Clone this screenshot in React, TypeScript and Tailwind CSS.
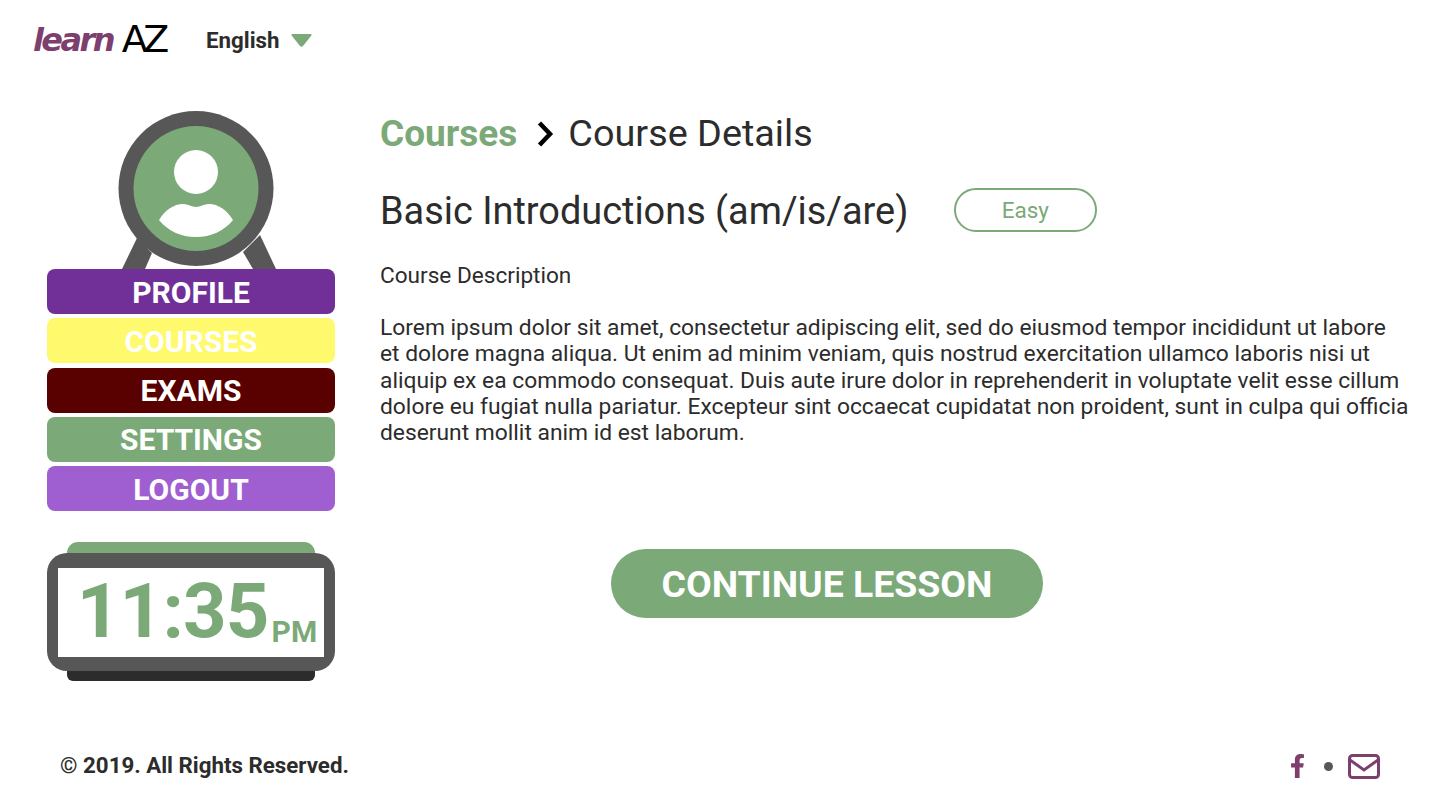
import { FaFacebookF } from 'react-icons/fa';

const menuItems = [
    { label: 'PROFILE', color: 'bg-[#703098]' },
    { label: 'COURSES', color: 'bg-[#fff96e]' },
    { label: 'EXAMS', color: 'bg-[#590000]' },
    { label: 'SETTINGS', color: 'bg-[#7ba978]' },
    { label: 'LOGOUT', color: 'bg-[#a05fd0]' },
];

const lorem =
    'Lorem ipsum dolor sit amet, consectetur adipiscing elit, sed do eiusmod tempor incididunt ut labore et dolore magna aliqua. Ut enim ad minim veniam, quis nostrud exercitation ullamco laboris nisi ut aliquip ex ea commodo consequat. Duis aute irure dolor in reprehenderit in voluptate velit esse cillum dolore eu fugiat nulla pariatur. Excepteur sint occaecat cupidatat non proident, sunt in culpa qui officia deserunt mollit anim id est laborum.';

function Avatar() {
    return (
        <svg width="164" height="158" viewBox="0 0 164 158" className="ml-[14px] block">
            <path d="M21 127 L6 158 H29 L36 142 Z M144 124 L160 158 H137 L127 141 Z" fill="#575757" />
            <circle cx="80" cy="77.5" r="77.5" fill="#575757" />
            <circle cx="80" cy="77.5" r="62.5" fill="#7ba978" />
            <circle cx="80" cy="61" r="22" fill="#fff" />
            <path d="M43 109 C49 99 58 93 67 93 C73 93 75 96 80 96 C85 96 87 93 93 93 C102 93 111 99 117 109 C108 120 95 126 80 126 C65 126 52 120 43 109 Z" fill="#fff" />
        </svg>
    );
}

function Clock() {
    return (
        <div className="flex flex-col items-center">
            <div className="h-[11px] w-[248px] rounded-t-[14px] bg-[#7ba978]" />
            <div className="h-[118px] w-[288px] rounded-[20px] bg-[#575757] px-[11px] py-[15px]">
                <div className="flex h-[89px] items-end justify-center bg-white pb-[7px] pl-[12px] text-[#7ba978]">
                    <span className="text-[76px] leading-[77px] font-bold tracking-[-0.8px]">11:35</span>
                    <span className="ml-[3px] text-[30px] leading-[36px] font-bold">PM</span>
                </div>
            </div>
            <div className="h-[10px] w-[248px] rounded-b-[6px] bg-[#2c2c2c]" />
        </div>
    );
}

export default function App() {
    return (
        <div className="h-[810px] w-[1440px] overflow-hidden bg-white font-['Roboto',sans-serif] text-[#2c2c2c]">
            <header className="flex h-[80px] items-center pl-[33px]">
                <div className="flex h-[72px] w-[173px] items-center leading-none">
                    <span className="font-['DejaVu_Sans',sans-serif] text-[32px] font-bold tracking-[-2.6px] text-[#7c3f6e] italic">learn</span>
                    <span className="mb-[3px] ml-[9px] font-['DejaVu_Sans',sans-serif] text-[38px] tracking-[-4.5px] text-black">AZ</span>
                </div>
                <span className="pt-[1px] text-[22.3px] font-bold">English</span>
                <svg width="21" height="13" viewBox="0 0 21 13" className="ml-[11px]">
                    <path d="M1.5 0 H19.5 Q21.5 0 20 2 L12 12 Q10.5 13.5 9 12 L1 2 Q-0.5 0 1.5 0 Z" fill="#7ba978" />
                </svg>
            </header>

            <div className="flex pt-[31px]">
                <aside className="ml-[47px] flex w-[288px] shrink-0 flex-col items-center">
                    <Avatar />
                    <nav className="flex w-full flex-col gap-[4.25px]">
                        {menuItems.map((item) => (
                            <div
                                key={item.label}
                                className={`flex h-[45px] items-center justify-center rounded-[8px] pt-[1px] text-[30px] font-bold text-white ${item.color}`}
                            >
                                {item.label}
                            </div>
                        ))}
                    </nav>
                    <div className="mt-[31px]">
                        <Clock />
                    </div>
                </aside>

                <main className="ml-[45px] w-[1029px]">
                    <div className="flex h-[46px] items-center text-[37.8px]">
                        <span className="text-[37px] font-bold text-[#7ba978]">Courses</span>
                        <svg width="18" height="28" viewBox="0 0 18 28" className="mr-[14px] ml-[19px]">
                            <path d="M3.5 3 L14 14 L3.5 25" fill="none" stroke="#000" strokeWidth="4.5" />
                        </svg>
                        <span className="pb-[2px]">Course Details</span>
                    </div>
                    <div className="mt-[30px] flex h-[46px] items-center">
                        <h1 className="pt-[2px] text-[37.9px]">Basic Introductions (am/is/are)</h1>
                        <span className="ml-[46px] flex h-[44px] w-[143px] items-center justify-center rounded-full border-[2px] border-[#7ba978] pt-[1px] pr-[1px] text-[22.5px] text-[#7ba978]">
                            Easy
                        </span>
                    </div>
                    <p className="mt-[29px] text-[22.6px] leading-[28px]">Course Description</p>
                    <p className="mt-[25px] text-[22.8px] leading-[26.25px]">{lorem}</p>
                    <div className="mt-[103px] flex w-[894px] justify-center">
                        <button className="h-[69px] w-[432px] rounded-full bg-[#7ba978] text-[37.4px] font-bold text-white">
                            CONTINUE LESSON
                        </button>
                    </div>
                </main>
            </div>

            <footer className="mt-[60px] flex h-[50px] items-center justify-between pr-[60px] pl-[60px]">
                <span className="pb-[1px] text-[22.3px] font-bold">© 2019. All Rights Reserved.</span>
                <div className="flex items-center text-[#7c3f6e]">
                    <FaFacebookF className="h-[24px] w-[15px]" />
                    <span className="mr-[15px] ml-[19px] h-[9px] w-[9px] rounded-full bg-[#575757]" />
                    <svg width="32" height="25" viewBox="0 0 32 25">
                        <rect x="1.5" y="1.5" width="29" height="22" rx="3" fill="none" stroke="currentColor" strokeWidth="3" />
                        <path d="M2 6 L16 16 L30 6" fill="none" stroke="currentColor" strokeWidth="3" />
                    </svg>
                </div>
            </footer>
        </div>
    );
}
